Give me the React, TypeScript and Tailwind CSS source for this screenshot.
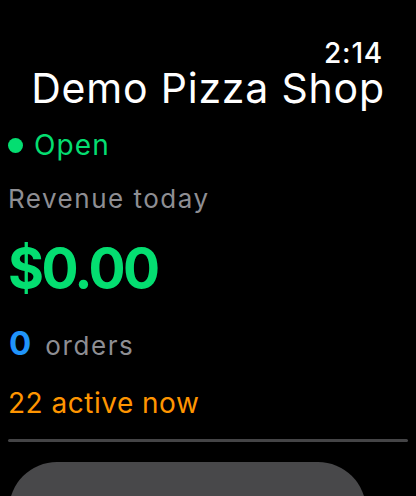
export default function App() {
  return (
    <div
      className="w-[416px] h-[496px] overflow-hidden bg-black text-white"
      style={{ fontFamily: "Inter, 'Noto Sans', sans-serif" }}
    >
      {/* Status time */}
      <div className="pt-[40px] pr-[33px] flex justify-end">
        <span className="text-[28px] leading-[26px] font-medium tracking-[0.8px]">2:14</span>
      </div>

      {/* Title */}
      <h1 className="mt-[2px] text-center text-[41px] leading-[40px] font-normal tracking-[0.8px]">
        Demo Pizza Shop
      </h1>

      <div className="px-[8px]">
        {/* Status */}
        <div className="mt-[19px] flex items-center gap-[11px] h-[36px]">
          <span className="w-[15px] h-[15px] rounded-full bg-[#04de71]" />
          <span className="text-[28px] leading-[36px] text-[#04de71] tracking-[1.1px]">Open</span>
        </div>

        {/* Revenue */}
        <p className="mt-[20px] text-[26px] leading-[32px] text-[#8e8e93] tracking-[1.5px]">
          Revenue today
        </p>
        <p className="mt-[23px] text-[55px] leading-[60px] font-bold text-[#04de71] tracking-[-2.6px]">
          $0.00
        </p>

        {/* Orders */}
        <div className="mt-[25px] flex items-baseline gap-[14px] h-[40px]">
          <span className="ml-[1px] text-[33px] leading-[40px] font-bold text-[#2094fa]">0</span>
          <span className="text-[26px] leading-[40px] text-[#8e8e93] tracking-[1.6px]">orders</span>
        </div>

        <p className="mt-[22px] text-[28px] leading-[36px] text-[#ff9500] tracking-[0.5px]">
          22 active now
        </p>

        <div className="mt-[18px] h-[3px] bg-[#444446] rounded-full" />

        {/* Action button */}
        <button className="mt-[20px] ml-[1px] w-[357px] h-[96px] rounded-[50px] bg-[#48484a]" />
      </div>
    </div>
  );
}
